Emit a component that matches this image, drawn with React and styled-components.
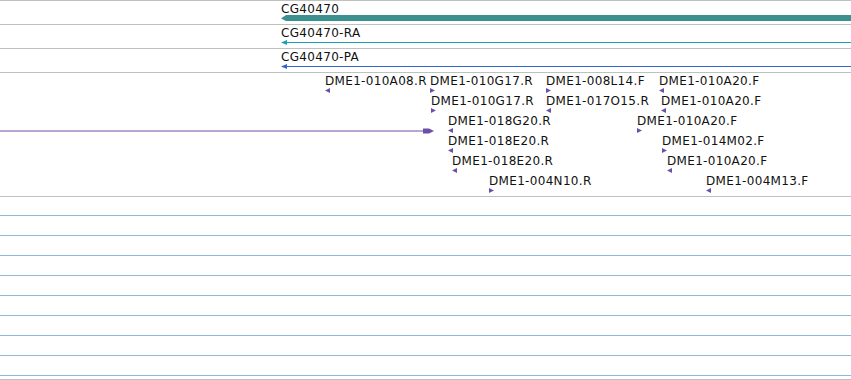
import React from 'react';
import styled, { createGlobalStyle } from 'styled-components';

const GlobalStyle = createGlobalStyle`
  html, body {
    margin: 0;
    padding: 0;
    background: #fff;
  }
  body {
    font-family: "DejaVu Sans", Verdana, sans-serif;
    font-size: 12px;
    color: #111;
    overflow: hidden;
  }
`;

const View = styled.div`
  width: 851px;
  height: 380px;
  box-sizing: border-box;
  border-top: 1px solid #c0c0c0;
  overflow: hidden;
`;

const Track = styled.div`
  position: relative;
  height: ${p => p.$h}px;
  border-bottom: 1px solid #c0c0c0;
`;

const Row = styled.div`
  position: relative;
  height: 20px;
`;

// features sit on the track canvas at their genomic x position
const Feature = styled.div`
  position: absolute;
  top: 0;
  left: ${p => p.$x}px;
  display: flex;
  flex-direction: column;
`;

const Label = styled.span`
  margin-top: 1px;
  height: 14px;
  line-height: 14px;
  letter-spacing: 0.32px;
  white-space: nowrap;
`;

const Glyph = styled.svg`
  display: block;
  margin-top: ${p => p.$top || 0}px;
  overflow: visible;
`;

const EmptyTrack = styled.div`
  display: flex;
  flex-direction: column;
  gap: 19px;
  padding: 18px 0 3px;
  border-bottom: 1px solid #c0c0c0;
`;

const GridLine = styled.div`
  height: 1px;
  background: #8db9dd;
`;

const PURPLE = '#6b50a8';

const reads = [
  [
    { x: 325, name: 'DME1-010A08.R', dir: 'l' },
    { x: 430, name: 'DME1-010G17.R', dir: 'r' },
    { x: 546, name: 'DME1-008L14.F', dir: 'r' },
    { x: 659, name: 'DME1-010A20.F', dir: 'l' },
  ],
  [
    { x: 431, name: 'DME1-010G17.R', dir: 'r' },
    { x: 546, name: 'DME1-017O15.R', dir: 'l' },
    { x: 661, name: 'DME1-010A20.F', dir: 'l' },
  ],
  [
    { x: 0, name: '', dir: 'long', w: 434 },
    { x: 448, name: 'DME1-018G20.R', dir: 'l' },
    { x: 637, name: 'DME1-010A20.F', dir: 'r' },
  ],
  [
    { x: 448, name: 'DME1-018E20.R', dir: 'l' },
    { x: 662, name: 'DME1-014M02.F', dir: 'r' },
  ],
  [
    { x: 452, name: 'DME1-018E20.R', dir: 'l' },
    { x: 667, name: 'DME1-010A20.F', dir: 'l' },
  ],
  [
    { x: 489, name: 'DME1-004N10.R', dir: 'r' },
    { x: 706, name: 'DME1-004M13.F', dir: 'l' },
  ],
];

function ReadGlyph({ dir, w }) {
  if (dir === 'long') {
    return (
      <Glyph width={w} height="6" $top={15}>
        <rect x="0" y="2.5" width={w - 10} height="1" fill={PURPLE} />
        <polygon
          points={`${w - 11},0.5 ${w - 5},0.5 ${w},3 ${w - 5},5.5 ${w - 11},5.5`}
          fill={PURPLE}
        />
      </Glyph>
    );
  }
  const pts = dir === 'l' ? '0,2.5 5,0 5,5' : '0,0 5,2.5 0,5';
  return (
    <Glyph width="5" height="5">
      <polygon points={pts} fill={PURPLE} />
    </Glyph>
  );
}

function Transcript({ name, color }) {
  return (
    <Feature $x={281}>
      <Label>{name}</Label>
      <Glyph width="570" height="5">
        <rect x="5" y="2" width="565" height="1" fill={color} />
        <polygon points="0,2.5 6,0 6,5" fill={color} />
      </Glyph>
    </Feature>
  );
}

export default function App() {
  return (
    <>
      <GlobalStyle />
      <View>
        <Track $h={23}>
          <Row>
            <Feature $x={281}>
              <Label>CG40470</Label>
              <Glyph width="570" height="6" $top={-1}>
                <polygon points="0,3.5 5,0 570,0 570,6 5,6" fill="#3d9090" />
              </Glyph>
            </Feature>
          </Row>
        </Track>
        <Track $h={23}>
          <Row>
            <Transcript name="CG40470-RA" color="#1ba0bc" />
          </Row>
        </Track>
        <Track $h={23}>
          <Row>
            <Transcript name="CG40470-PA" color="#3366c8" />
          </Row>
        </Track>
        <Track $h={123}>
          {reads.map((row, i) => (
            <Row key={i}>
              {row.map((f, j) => (
                <Feature key={j} $x={f.x}>
                  {f.name && <Label>{f.name}</Label>}
                  <ReadGlyph dir={f.dir} w={f.w} />
                </Feature>
              ))}
            </Row>
          ))}
        </Track>
        <EmptyTrack>
          {Array.from({ length: 9 }, (_, i) => (
            <GridLine key={i} />
          ))}
        </EmptyTrack>
      </View>
    </>
  );
}
